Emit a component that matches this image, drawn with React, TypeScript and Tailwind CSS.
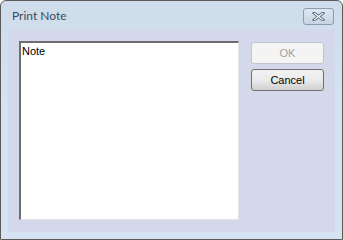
export default function App() {
  return (
    <div className="w-[343px] h-[240px] bg-white">
      <div className="flex h-full w-full flex-col rounded-t-[6px] border border-[#5b5b5b] bg-gradient-to-b from-[#cfdcea] via-[#d6e3f1] to-[#d6e3f1]">
        {/* title bar */}
        <div className="flex h-[29px] shrink-0 items-center justify-between pl-[11px] pr-[8px] pt-[1px]">
          <span className="text-[12px] text-[#3b4a59] [font-family:'Lato','Open_Sans',sans-serif]">
            Print Note
          </span>
          <div className="flex h-[17px] w-[31px] items-center justify-center rounded-[3px] border border-[#8c9cb0] bg-gradient-to-b from-[#dde7f2] to-[#c6d4e4]">
            <svg width="13" height="9" viewBox="0 0 13 9">
              <path d="M2 1 L11 8 M11 1 L2 8" stroke="#5f6b78" strokeWidth="3" strokeLinecap="square" />
              <path d="M2 1 L11 8 M11 1 L2 8" stroke="#f4f6f8" strokeWidth="1.2" />
            </svg>
          </div>
        </div>
        {/* client */}
        <div className="mx-[7px] mb-[7px] flex flex-1 gap-[12px] bg-[#d4d8eb] pl-[11px] pr-[11px] pt-[11px] pb-[12px]">
          <div className="flex-1 border-t-2 border-l-2 border-b border-r border-t-[#6e6e6e] border-l-[#6e6e6e] border-b-[#e4e4e4] border-r-[#e4e4e4] bg-white">
            <div className="pl-[1px] pt-[2px] text-[11px] leading-[13px] text-black [font-family:'Liberation_Sans',sans-serif]">
              Note
            </div>
          </div>
          <div className="flex w-[73px] flex-col gap-[5px] pt-[1px]">
            <div className="flex h-[22px] items-center justify-center rounded-[3px] border border-[#c2c5cf] bg-[#f4f4f4] text-[11px] text-[#a0a0a0] [font-family:'Liberation_Sans',sans-serif]">
              OK
            </div>
            <div className="flex h-[22px] items-center justify-center rounded-[3px] border border-[#707070] bg-gradient-to-b from-[#f2f2f2] via-[#ebebeb] to-[#cfcfcf] text-[11px] text-black [font-family:'Liberation_Sans',sans-serif]">
              Cancel
            </div>
          </div>
        </div>
      </div>
    </div>
  );
}
